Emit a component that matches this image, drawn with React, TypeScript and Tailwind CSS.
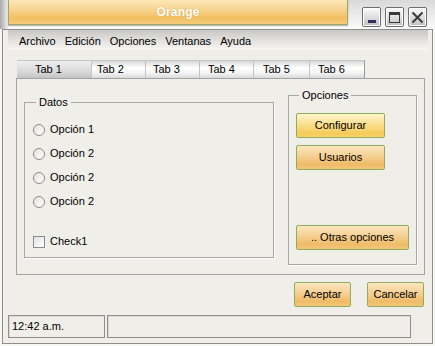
import React from 'react';

const tabs = [
  { label: 'Tab 1', w: 'w-[75px]', pl: 'pl-[18px]', active: true },
  { label: 'Tab 2', w: 'w-[54px]', pl: 'pl-[5px]' },
  { label: 'Tab 3', w: 'w-[54px]', pl: 'pl-[7px]' },
  { label: 'Tab 4', w: 'w-[54px]', pl: 'pl-[8px]' },
  { label: 'Tab 5', w: 'w-[56px]', pl: 'pl-[9px]' },
  { label: 'Tab 6', w: 'w-[55px]', pl: 'pl-[8px]' },
];

const radios = ['Opción 1', 'Opción 2', 'Opción 2', 'Opción 2'];

const orangeBtn =
  'flex items-center justify-center h-[25px] rounded-[2px] border border-[#8fae5c] bg-[linear-gradient(to_bottom,#fbe6c0_0%,#f5cf92_45%,#efbb68_80%,#f3c67c_100%)] text-black';

function WinButton({ children }: { children: React.ReactNode }) {
  return (
    <div className="w-[19px] h-[20px] flex items-center justify-center rounded-[2px] border border-[#6e6e6e] bg-[linear-gradient(to_bottom,#fbfbfb,#d9d9d9_60%,#bdbdbd)] shadow-[inset_0_0_0_1px_#ffffff]">
      {children}
    </div>
  );
}

export default function App() {
  return (
    <div className="w-[435px] h-[346px] overflow-hidden bg-[#f6f6f4] font-['Liberation_Sans',Arial,sans-serif] text-[11px] text-black">
      {/* Title strip */}
      <div className="h-[29px] flex bg-[linear-gradient(to_bottom,#d9d9d9,#fbfbfb)]">
        <div className="w-[8px] bg-[linear-gradient(to_right,#a8a8a8,#efefef)]" />
        <div className="w-[340px] h-[25px] flex items-center justify-center border-l border-r border-b border-[#a0a66a] bg-[linear-gradient(to_bottom,#fde7b8_0%,#f8d696_35%,#f0bf60_75%,#f5cb7c_100%)] shadow-[0_1px_1px_rgba(0,0,0,0.25)]">
          <span className="text-white font-bold text-[12px] tracking-[0.2px] [text-shadow:0_0_1px_#c9943a]">Orange</span>
        </div>
        <div className="ml-[14px] mt-[7px] flex gap-[4px]">
          <WinButton>
            <div className="w-[8px] h-[3px] mt-[9px] bg-[#303062]" />
          </WinButton>
          <WinButton>
            <div className="w-[11px] h-[11px] border border-[#3a3a3a] border-t-[3px]" />
          </WinButton>
          <WinButton>
            <svg width="13" height="13" viewBox="0 0 13 13">
              <path d="M1.5 1.5 L11.5 11.5 M11.5 1.5 L1.5 11.5" stroke="#3a3a3a" strokeWidth="2" />
            </svg>
          </WinButton>
        </div>
      </div>

      {/* Window frame */}
      <div className="ml-[2px] w-[431px] h-[315px] border border-[#8e8e8e] bg-[#f0eee9] flex flex-col">
        {/* Menu bar */}
        <div className="ml-[5px] w-[420px] h-[20px] flex items-center gap-[9px] pl-[11px] pt-[2px] bg-[linear-gradient(to_bottom,#c9c8c4,#e3e2df_55%,#f7f6f3)]">
          <span>Archivo</span>
          <span>Edición</span>
          <span>Opciones</span>
          <span>Ventanas</span>
          <span>Ayuda</span>
        </div>

        {/* Tabs */}
        <div className="ml-[14px] mt-[10px] flex h-[18px]">
          {tabs.map((t) => (
            <div
              key={t.label}
              className={`${t.w} ${t.pl} h-[18px] flex items-center border-t border-r border-[#c4c4c4] ${
                t.active
                  ? 'bg-[linear-gradient(to_bottom,#eeeeee,#dadada_60%,#c4c4c4)]'
                  : 'bg-[linear-gradient(to_bottom,#d8d8d8,#ffffff_40%,#f4f4f4_70%,#dadada)]'
              } last:border-r-[#9a9a9a]`}
            >
              {t.label}
            </div>
          ))}
        </div>

        {/* Tab panel */}
        <div className="ml-[13px] w-[409px] h-[197px] border border-[#a3a3a3] flex items-start">
          <fieldset className="ml-[7px] mt-[17px] w-[250px] h-[162px] border border-[#a7a6a0] pl-[8px] shadow-[1px_1px_0_#ffffff]">
            <legend className="ml-[3px] px-[3px] leading-[13px]">Datos</legend>
            <div className="flex flex-col gap-[11px] mt-[14px]">
              {radios.map((r, i) => (
                <div key={i} className="flex items-center h-[13px] gap-[5px]">
                  <div className="w-[12px] h-[12px] rounded-full border border-[#8b8b8b] bg-[linear-gradient(135deg,#e2e2e2,#ffffff)]" />
                  <span>{r}</span>
                </div>
              ))}
            </div>
            <div className="flex items-center h-[13px] gap-[5px] mt-[27px]">
              <div className="w-[12px] h-[12px] border border-[#8b8b8b] bg-[linear-gradient(135deg,#e2e2e2,#ffffff)]" />
              <span>Check1</span>
            </div>
          </fieldset>

          <fieldset className="ml-[14px] mt-[10px] w-[129px] h-[176px] border border-[#a7a6a0] pl-[7px] shadow-[1px_1px_0_#ffffff]">
            <legend className="ml-[3px] px-[3px] leading-[13px]">Opciones</legend>
            <div className="flex flex-col mt-[11px]">
              <div className="w-[89px] h-[25px] flex items-center justify-center rounded-[2px] border border-[#8fae5c] bg-[linear-gradient(to_bottom,#fff4cc_0%,#fae08e_45%,#f5cb58_85%,#f7d46c_100%)]">
                Configurar
              </div>
              <div className={`${orangeBtn} w-[89px] mt-[7px]`}>Usuarios</div>
              <div className={`${orangeBtn} w-[113px] mt-[55px]`}>.. Otras opciones</div>
            </div>
          </fieldset>
        </div>

        {/* Dialog buttons */}
        <div className="mt-[7px] flex justify-end gap-[16px] pr-[8px]">
          <div className={`${orangeBtn} w-[57px]`}>Aceptar</div>
          <div className={`${orangeBtn} w-[57px]`}>Cancelar</div>
        </div>

        {/* Status bar */}
        <div className="mt-[8px] ml-[5px] flex gap-[2px]">
          <div className="w-[97px] h-[23px] flex items-center pl-[3px] border border-[#8f8f8f] shadow-[inset_1px_1px_0_#d8d8d8]">
            12:42 a.m.
          </div>
          <div className="w-[304px] h-[23px] border border-[#8f8f8f] shadow-[inset_1px_1px_0_#d8d8d8]" />
        </div>
      </div>
    </div>
  );
}
